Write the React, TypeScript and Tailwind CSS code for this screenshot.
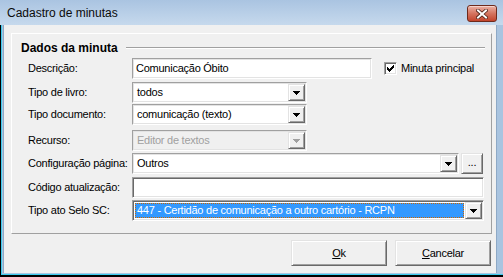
import React from 'react';

const sunkenLight =
  'border border-t-[#a0a0a0] border-l-[#a0a0a0] border-b-white border-r-white shadow-[inset_1px_1px_0_#e3e3e3,inset_-1px_-1px_0_#e3e3e3]';
const sunkenDark =
  'border border-t-[#a0a0a0] border-l-[#a0a0a0] border-b-white border-r-white shadow-[inset_1px_1px_0_#696969,inset_-1px_-1px_0_#e3e3e3]';
const raised =
  'border border-t-[#e3e3e3] border-l-[#e3e3e3] border-b-[#696969] border-r-[#696969] shadow-[inset_1px_1px_0_#ffffff,inset_-1px_-1px_0_#a0a0a0]';

function Arrow({ color = '#000' }: { color?: string }) {
  return (
    <svg width="7" height="4" viewBox="0 0 7 4" shapeRendering="crispEdges">
      <rect x="0" y="0" width="7" height="1" fill={color} />
      <rect x="1" y="1" width="5" height="1" fill={color} />
      <rect x="2" y="2" width="3" height="1" fill={color} />
      <rect x="3" y="3" width="1" height="1" fill={color} />
    </svg>
  );
}

function DropButton({ disabled }: { disabled?: boolean }) {
  return (
    <div className={`w-[17px] h-full flex items-center justify-center bg-[#f0f0f0] ${raised}`}>
      <Arrow color={disabled ? '#a0a0a0' : '#000'} />
    </div>
  );
}

function Combo({
  value,
  width,
  disabled,
  dark,
  selected,
}: {
  value: string;
  width: string;
  disabled?: boolean;
  dark?: boolean;
  selected?: boolean;
}) {
  return (
    <div
      className={`${width} h-[21px] flex items-stretch p-px ${dark ? sunkenDark : sunkenLight} ${
        disabled ? 'bg-[#f0f0f0]' : 'bg-white'
      }`}
    >
      <div className="flex-1 flex items-stretch min-w-0 p-px">
        {selected ? (
          <div className="flex-1 flex items-center bg-[#3399ff] text-white pl-[1px] border border-dotted border-[#cc6600] whitespace-nowrap overflow-hidden">
            {value}
          </div>
        ) : (
          <div
            className={`flex-1 flex items-center pl-[2px] whitespace-nowrap overflow-hidden ${
              disabled ? 'text-[#a0a0a0]' : 'text-black'
            }`}
          >
            {value}
          </div>
        )}
      </div>
      <DropButton disabled={disabled} />
    </div>
  );
}

function Edit({ value, width, dark }: { value: string; width: string; dark?: boolean }) {
  return (
    <div
      className={`${width} h-[21px] flex items-center pl-[3px] bg-white text-black whitespace-nowrap ${
        dark ? sunkenDark : sunkenLight
      }`}
    >
      {value}
    </div>
  );
}

function Row({ label, mt, children }: { label: string; mt: string; children: React.ReactNode }) {
  return (
    <div className={`flex items-center h-[21px] ${mt}`}>
      <div className="w-[104px] shrink-0 text-black whitespace-nowrap">{label}</div>
      {children}
    </div>
  );
}

function CheckMark() {
  return (
    <svg width="7" height="7" viewBox="0 0 7 7" shapeRendering="crispEdges">
      <rect x="6" y="0" width="1" height="1" fill="#000" />
      <rect x="5" y="1" width="2" height="1" fill="#000" />
      <rect x="0" y="2" width="1" height="1" fill="#000" />
      <rect x="4" y="2" width="3" height="1" fill="#000" />
      <rect x="0" y="3" width="2" height="1" fill="#000" />
      <rect x="3" y="3" width="3" height="1" fill="#000" />
      <rect x="0" y="4" width="5" height="1" fill="#000" />
      <rect x="1" y="5" width="3" height="1" fill="#000" />
      <rect x="2" y="6" width="1" height="1" fill="#000" />
    </svg>
  );
}

function CloseButton() {
  return (
    <div className="mt-[5px] w-[30px] h-[17px] rounded-[3px] border border-[#6e2a1c] bg-gradient-to-b from-[#eab0a4] via-[#d4745f] to-[#c2432b] shadow-[inset_0_1px_0_#f6d3cb] flex items-center justify-center">
      <svg width="12" height="10" viewBox="0 0 12 10">
        <path d="M2 1.5 L10 8.5 M10 1.5 L2 8.5" stroke="#4a1e14" strokeWidth="3.6" strokeLinecap="square" />
        <path d="M2 1.5 L10 8.5 M10 1.5 L2 8.5" stroke="#ffffff" strokeWidth="2" strokeLinecap="square" />
      </svg>
    </div>
  );
}

function PushButton({ accel, rest }: { accel: string; rest: string }) {
  return (
    <div className={`w-[96px] h-[26px] flex items-center justify-center bg-[#f0f0f0] text-black ${raised}`}>
      <span>
        <span className="underline underline-offset-[1px]">{accel}</span>
        {rest}
      </span>
    </div>
  );
}

export default function App() {
  return (
    <div className="w-[503px] h-[277px] overflow-hidden bg-[#c4d7eb] font-['Liberation_Sans',Arial,sans-serif] text-[11px] tracking-[-0.25px] leading-[13px]">
      {/* title bar */}
      <div className="h-[25px] flex items-start justify-between pl-[7px] pr-[6px] bg-gradient-to-b from-[#aac4e1] to-[#c6d9ed] tracking-normal">
        <span className="mt-[6px] text-[12px] leading-[14px] text-[#0b0b0b]">Cadastro de minutas</span>
        <CloseButton />
      </div>

      {/* frame + client */}
      <div className="h-[252px] border-l border-b-2 border-black">
        <div className="h-full border-l border-b border-[#3ccbee] pl-px pr-[6px] pb-px bg-[#a9c4e0]">
          <div className="h-[248px] w-[494px] bg-[#f0f0f0] border-l border-r border-[#8ea9c6] flex flex-col">
            {/* panel */}
            <div className="ml-[7px] mt-[8px] w-[481px] h-[201px] border border-t-white border-l-white border-b-[#a0a0a0] border-r-[#a0a0a0] flex flex-col">
              <div className="mt-[7px] h-[14px] flex items-center pl-[9px] pr-[6px]">
                <span className="font-bold text-[12px] leading-[14px] tracking-normal text-black">Dados da minuta</span>
                <div className="ml-[8px] flex-1 h-[2px] border-t border-t-[#a0a0a0] border-b border-b-white" />
              </div>
              <div className="pl-[16px] flex flex-col">
                <Row label="Descrição:" mt="mt-[3px]">
                  <Edit value="Comunicação Óbito" width="w-[240px]" />
                  <div className="ml-[12px] w-[13px] h-[13px] bg-white flex items-center justify-center border border-t-[#a0a0a0] border-l-[#a0a0a0] border-b-white border-r-white shadow-[inset_1px_1px_0_#696969,inset_-1px_-1px_0_#e3e3e3]">
                    <CheckMark />
                  </div>
                  <span className="ml-[4px] text-black">Minuta principal</span>
                </Row>
                <Row label="Tipo de livro:" mt="mt-[3px]">
                  <Combo value="todos" width="w-[175px]" />
                </Row>
                <Row label="Tipo documento:" mt="mt-[1px]">
                  <Combo value="comunicação (texto)" width="w-[175px]" />
                </Row>
                <Row label="Recurso:" mt="mt-[5px]">
                  <Combo value="Editor de textos" width="w-[175px]" disabled />
                </Row>
                <Row label="Configuração página:" mt="mt-[2px]">
                  <Combo value="Outros" width="w-[327px]" />
                  <div className={`ml-[2px] w-[22px] h-[21px] flex items-end justify-center pb-[4px] bg-[#f0f0f0] text-black ${raised}`}>
                    ...
                  </div>
                </Row>
                <Row label="Código atualização:" mt="mt-[3px]">
                  <Edit value="" width="w-[352px]" dark />
                </Row>
                <Row label="Tipo ato Selo SC:" mt="mt-[2px]">
                  <Combo
                    value="447 - Certidão de comunicação a outro cartório - RCPN"
                    width="w-[352px]"
                    dark
                    selected
                  />
                </Row>
              </div>
            </div>

            {/* buttons */}
            <div className="mt-[6px] flex justify-end gap-[8px] pr-[5px]">
              <PushButton accel="O" rest="k" />
              <PushButton accel="C" rest="ancelar" />
            </div>
          </div>
        </div>
      </div>
    </div>
  );
}
